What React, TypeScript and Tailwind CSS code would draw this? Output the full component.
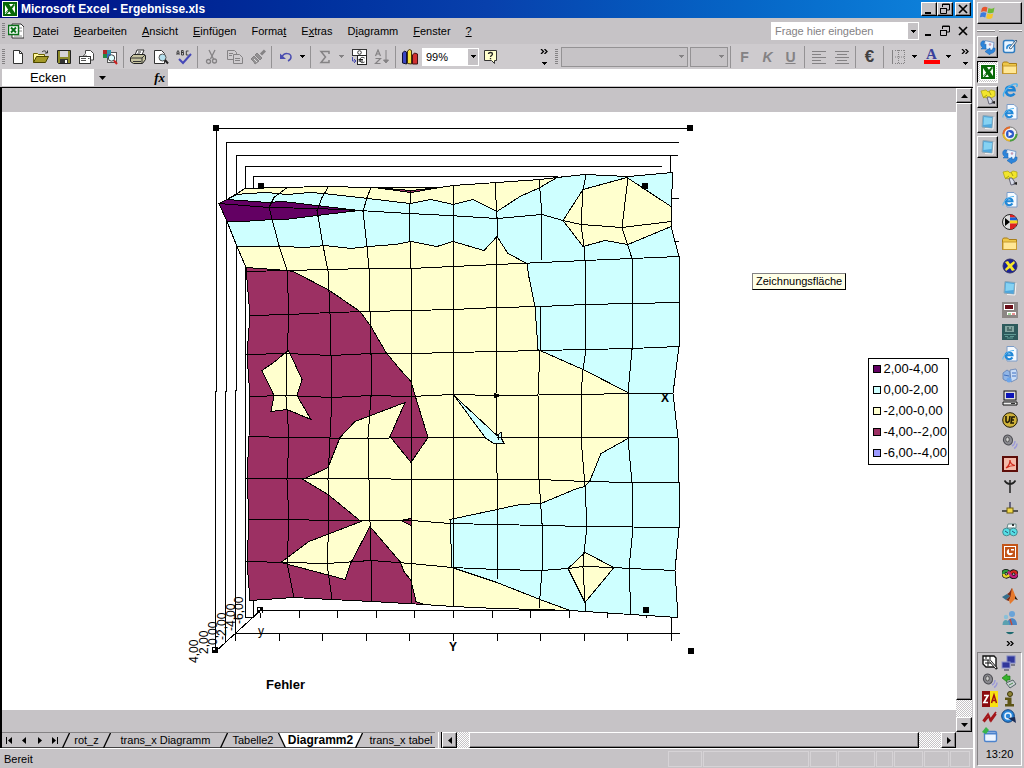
import React from "react";

type Pt = string;

const OUTLINE: Pt =
  "245,188 283,187 325,186 370,187 440,187 453,185 497,182 540,179 557,177 585,174 628,176 673,172 671,206 671,226 679,256 679,302 679,346 673,393 678,437 679,482 679,527 675,570 678,617 631,614 570,610 540,609 497,608 453,606 424,604 372,601 331,599 294,597 250,600 247,561 249,519 247,478 249,436 250,396 247,354 250,315 246,267 237,246 227,221 219,203 227,199 237,193";

const CYAN: Pt =
  "219,203 227,199 237,194 248,193 267,192 287,194 310,192 323,193 368,198 410,203 431,199 449,203 453,204 473,199 497,211 520,196 540,187 557,177 585,174 628,176 673,172 671,206 671,226 679,256 679,302 679,346 673,393 678,437 679,482 679,527 675,570 678,617 631,614 570,610 540,599 497,582 452,567 450,519 497,509 520,504 541,503 577,488 585,486 590,480 601,453 628,438 628,392 583,369 540,350 538,349 535,306 529,277 527,263 508,253 497,236 484,250 453,241 437,246 411,241 395,244 368,246 351,248 325,245 305,247 283,246 265,246 237,246 227,221";

const MAROON: Pt =
  "246,267 287,270 293,271 328,289 360,311 371,326 386,352 401,370 411,381 416,398 428,437 411,462 390,436 405,402 355,421 340,437 328,467 303,479 328,494 361,521 309,541 281,562 345,579 351,562 370,526 400,561 404,571 411,580 416,601 424,604 372,601 331,599 294,597 250,600 247,561 249,519 247,478 249,436 250,396 247,354 250,315";

const GRID: Pt[] = [
  "287,187 274,197 269,207 279,245 287,270 289,314 287,351 286,396 289,437 287,479 289,519 287,562 294,597",
  "328,187 322,197 317,210 323,245 328,270 330,313 331,354 332,396 330,437 328,479 329,520 327,563 332,599",
  "371,187 367,197 363,211 367,246 369,268 370,311 371,354 371,396 368,437 369,479 370,521 371,560 372,601",
  "411,190 410,203 409,213 410,241 411,268 411,603",
  "453,185 453,606",
  "495,182 497,217 497,237 496,394 496,437 498,507 497,580 497,607",
  "539,178 542,214 541,260 541,307 540,350 538,394 539,479 542,523 542,570 539,608",
  "586,175 583,189 581,224 584,246 585,260 585,305 586,349 583,370 581,394 581,437 585,486 587,526 584,552 583,567 585,602 585,611",
  "628,177 622,227 632,258 632,349 628,392 628,438 632,482 633,528 629,568 631,614",
  "219,203 269,207 317,208 359,210 409,213 449,215 497,218 542,214 563,220 581,224 622,227 671,221",
  "247,271 287,270 328,269 369,268 411,268 453,266 497,264 541,262 585,260 632,258 679,256",
  "250,315 289,314 330,312 370,311 411,310 453,309 497,307 541,306 585,304 632,303 679,302",
  "247,354 287,353 331,355 371,353 411,353 453,352 497,351 540,350 586,349 632,348 679,346",
  "250,396 286,395 332,397 371,395 411,396 453,394 497,395 581,394 628,393 673,393",
  "249,436 289,437 368,438 411,437 678,437",
  "247,478 328,478 453,479 539,479 585,481 632,482 679,482",
  "249,519 289,519 329,520 411,520 450,523 542,525 587,526 679,527",
  "247,561 287,562 327,563 371,560 411,563 452,567 497,569 542,570 568,568 583,566 614,567 629,568 675,570",
];

const WALLS: Pt[] = [
  "690,128 216,128 216,391 215,391 215,650",
  "678,142 226,142 226,391 225,391 225,642",
  "677,155 236,155 236,390 235,390 235,640",
  "661,166 245,166 245,617",
  "557,176 253,176 253,187",
  "253,600 253,617 244,617",
  "670,155 670,172",
  "671,198 678,198",
  "674,241 678,241",
  "215,651 260,610",
  "260,610 671,610",
  "235,633 679,633",
  "671,617 671,640",
];

const INNER_TICKS = [260, 299, 337, 376, 414, 453, 492, 530, 569, 607, 646];
const OUTER_TICKS = [235, 279, 322, 366, 409, 453, 497, 540, 584, 627];
const HANDLES = [[216, 128], [690, 128], [261, 186], [645, 186], [260, 610], [646, 610], [215, 650], [691, 651]];
const DEPTH_LABELS: [string, number, number][] = [
  ["4,00", 198, 663],
  ["2,00", 208, 654],
  ["0,00", 217, 645],
  ["-2,00", 226, 640],
  ["-4,00", 235, 631],
  ["-6,00", 243, 624],
];

function SurfaceChart() {
  return (
    <svg width="520" height="598" viewBox="180 112 520 598" className="ml-[178px] shrink-0 self-start" role="img" aria-label="Fehler">
      <g transform="translate(.5 .5)" stroke="#000" fill="none" shapeRendering="crispEdges">
        {WALLS.map((p) => <polyline key={p} points={p} />)}
        {INNER_TICKS.map((x) => <path key={x} d={`M${x} 610v7`} />)}
        {OUTER_TICKS.map((x) => <path key={x} d={`M${x} ${x === 235 ? 627 : 633}V640`} />)}
      </g>
      <g transform="translate(0 .5)" stroke="#000" fill="none" shapeRendering="crispEdges">
        <polygon points={OUTLINE} fill="#ffffce" />
        <polygon points={CYAN} fill="#ceffff" />
        <polygon points="563,220 583,189 627,177 671,206 671,226 628,244 605,240 583,246" fill="#ffffce" />
        <polygon points="585,552 614,567 585,602 568,568" fill="#ffffce" />
        <polygon points={MAROON} fill="#9c3063" />
        <polygon points="262,370 275,361 288,350 290,353 302,379 297,395 311,419 287,409 271,411 274,395" fill="#ffffce" />
        <polygon points="219,203 227,199 268,202 283,201 325,206 359,210 325,214 285,219 272,219 243,221 227,221" fill="#630063" />
        <polygon points="374,187 411,190 440,187 411,192" fill="#9c3063" />
        <polygon points="401,520 411,518 411,525" fill="#9c3063" />
        <polygon points="494,393 500,395 494,397" fill="#5a2038" />
        {GRID.map((p) => <polyline key={p} points={p} />)}
        <polygon points="454,395 497,435 501,432 501,437 504,443 494,443 486,438" fill="#ceffff" />
        <path d="M497 437h5M498 434v5" />
      </g>
      {HANDLES.map(([x, y]) => <rect key={`${x}-${y}`} x={x - 3} y={y - 3} width="6" height="6" />)}
      <path d="M213 648h2v2h-2zM258 608h2v2h-2zM260 611h2v2h-2z" fill="#fff" />
      <g fontFamily="'Liberation Sans', Arial, sans-serif" fontSize="12">
        {DEPTH_LABELS.map(([t, x, y]) => (
          <text key={t} transform={`translate(${x} ${y}) rotate(-90)`}>{t}</text>
        ))}
        <text x="258" y="635">y</text>
        <text x="449" y="651" fontWeight="bold">Y</text>
        <text x="661" y="402" fontWeight="bold">X</text>
        <text x="266" y="689" fontWeight="bold" fontSize="13">Fehler</text>
      </g>
    </svg>
  );
}

const LEGEND = [
  { label: "2,00-4,00", swatch: "bg-[#630063]" },
  { label: "0,00-2,00", swatch: "bg-[#ceffff]" },
  { label: "-2,00-0,00", swatch: "bg-[#ffffce]" },
  { label: "-4,00--2,00", swatch: "bg-[#9c3063]" },
  { label: "-6,00--4,00", swatch: "bg-[#9c9aff]" },
];

/* ---------- icons ---------- */

function Ico({ children, size = 16 }: { children: React.ReactNode; size?: number }) {
  return (
    <svg width={size} height={size} viewBox="0 0 16 16" className="shrink-0" aria-hidden="true">
      {children}
    </svg>
  );
}

const Down = () => (
  <svg width="5" height="3" viewBox="0 0 5 3" shapeRendering="crispEdges" className="shrink-0" fill="currentColor" aria-hidden="true">
    <path d="M0 0h5v1H0zM1 1h3v1H1zM2 2h1v1H2z" />
  </svg>
);

const ExcelIcon = ({ size }: { size?: number }) => (
  <Ico size={size}>
    <rect width="16" height="16" fill="#fff" />
    <rect x="1" y="1" width="14" height="14" fill="#086808" />
    <rect x="3" y="3" width="10" height="10" fill="#fff" />
    <path d="M3 3h4l6 9v1H9L3 4z" fill="#086808" />
    <path d="M12.500 3.500l-8.500 9" stroke="#086808" strokeWidth="2" />
    <path d="M11.500 5.500l1.500-1M4 12l2-2" stroke="#fff" strokeWidth=".6" />
  </Ico>
);
const ExcelDoc = () => (
  <Ico>
    <path d="M4 1h9l3 3v11H4z" fill="#fff" stroke="#333" />
    <path d="M11 5h3M11 8h3M6 13h8" stroke="#888" />
    <rect x=".5" y="2.500" width="10" height="9" fill="#fff" stroke="#087018" strokeWidth="1.500" />
    <path d="M3 4.500l5 5M8 4.500l-5 5" stroke="#087018" strokeWidth="2" />
  </Ico>
);
const NewDoc = () => <Ico><path d="M3.500 1.500h6l3 3v10h-9z" fill="#fff" stroke="#333" /><path d="M9.500 1.500v3h3" fill="none" stroke="#333" /></Ico>;
const OpenIcon = () => (
  <Ico>
    <path d="M.5 13.500v-9h4l1 1h6v2" fill="#fff79c" stroke="#6b6300" />
    <path d="M.5 13.500l3-6h12l-3 6z" fill="#a59a29" stroke="#4a4500" />
    <path d="M9 3c2-2 4-1 5 1M12 4h2.500V1.500" fill="none" stroke="#333" />
  </Ico>
);
const SaveIcon = () => (
  <Ico>
    <path d="M1.500 1.500h13v13h-12l-1-1z" fill="#8c8a29" stroke="#222" />
    <rect x="4" y="2" width="8" height="6" fill="#d6d3d6" />
    <rect x="4" y="10" width="8" height="4" fill="#333" /><rect x="9" y="11" width="2" height="3" fill="#fff" />
  </Ico>
);
const MailDoc = () => (
  <Ico>
    <path d="M6.500 6V1.500h5l3 3V11H12" fill="#fff" stroke="#444" />
    <path d="M7 4l-3 3h4" fill="#eee" stroke="#666" />
    <rect x=".5" y="7.500" width="11" height="7" fill="#fff" stroke="#333" />
    <path d="M2 9.500h5M2 11.500h5M9 9.500h1.500" stroke="#555" />
  </Ico>
);
const FindDoc = () => (
  <Ico>
    <rect x="5.500" y="3.500" width="9" height="10" fill="#fff" stroke="#555" />
    <rect x="1" y="1" width="4" height="4" fill="#b02828" /><rect x="5" y="1" width="4" height="4" fill="#39a" />
    <rect x="1" y="5" width="4" height="4" fill="#284" /><rect x="5" y="5" width="4" height="4" fill="#36c" />
    <circle cx="9.500" cy="9" r="3.200" fill="#dff" stroke="#444" /><path d="M12 11.500l3 3.500" stroke="#c22" strokeWidth="2" />
  </Ico>
);
const PrintIcon = () => (
  <Ico>
    <path d="M5 6l2-5h7l-2 5" fill="#fff" stroke="#333" />
    <path d="M.5 8.500l3-3h11l1 1v4l-3 4h-9l-3-2z" fill="#c6c3a0" stroke="#222" />
    <path d="M1 9h11l3-3M3 12.500h8M12 9v5M8 3h3M7 5h3" fill="none" stroke="#333" />
  </Ico>
);
const PreviewIcon = () => (
  <Ico>
    <path d="M1.500 1.500h7l3 3v10h-10z" fill="#fff" stroke="#333" />
    <circle cx="9.500" cy="8.500" r="3.500" fill="#b5e0ee" stroke="#555" /><path d="M12 11l3 3.500" stroke="#222" strokeWidth="2" />
  </Ico>
);
const SpellIcon = () => (
  <Ico>
    <g fill="none" stroke="#333" strokeWidth=".9">
      <path d="M1 6V3l1-1.500L3 3v3M1 4.300h2M5.500 6V1.500h1.700v2H5.500h2V6zM12.500 2h-2.200v4h2.200" />
    </g>
    <path d="M3 10l4 4 8-9" fill="none" stroke="#4548b8" strokeWidth="2" />
  </Ico>
);
const CutIcon = () => <Ico><path d="M5 1l4.500 9M11 1L6.500 10" stroke="#848284" strokeWidth="1.300" /><circle cx="4.500" cy="12.500" r="2" fill="none" stroke="#848284" strokeWidth="1.300" /><circle cx="10.500" cy="12" r="2" fill="none" stroke="#848284" strokeWidth="1.300" /></Ico>;
const CopyIcon = () => <Ico><path d="M.5 1.500h7l2 2v7h-9z" fill="#cecbce" stroke="#848284" /><path d="M6.500 5.500h6l3 3v6h-9z" fill="#cecbce" stroke="#848284" /><path d="M2 4.500h4M2 6.500h3M8 9.500h5M8 11.500h5" stroke="#848284" /></Ico>;
const BrushIcon = () => <Ico><path d="M15 1.500l-4 4" stroke="#848284" strokeWidth="3" /><path d="M7 4l5 5-2 2-5-5zM4 7l5 5-4 3-1-2-3-3z" fill="#949294" stroke="#848284" /><path d="M4 10l3 3" stroke="#ddd" /></Ico>;
const UndoIcon = () => <Ico><path d="M4 8c2-5 9-4 9 0 0 2-1 3-3 4" fill="none" stroke="#4a4db0" strokeWidth="1.500" /><path d="M2 4.500V10h6z" fill="#4a4db0" /></Ico>;
const SumIcon = () => <Ico><path d="M12 5V2.500H4L8.500 8 4 13.500h8V11" fill="none" stroke="#848284" strokeWidth="1.500" /></Ico>;
const EuroConv = () => (
  <Ico>
    <rect x="1.500" y=".5" width="14" height="6" fill="#fff" stroke="#333" /><circle cx="8.500" cy="3.500" r="1.800" fill="none" stroke="#333" />
    <rect x="6.500" y="6.500" width="9" height="9" fill="#fff" stroke="#222" />
    <path d="M13.500 9c-3-1.500-4.500 0-4.500 2s1.500 3.500 4.500 2M7.500 10.500H12M7.500 12H12" fill="none" stroke="#222" />
    <path d="M1.500 8v4h3M3 10l2 2-2 2" fill="none" stroke="#4a4db0" />
  </Ico>
);
const SortIcon = () => (
  <Ico>
    <path d="M1.500 7l2.500-6 2.500 6M2.500 5h3M1.500 9.500h5l-5 5h5" fill="none" stroke="#848284" strokeWidth="1.200" />
    <path d="M12 1v12M9.500 11l2.500 3 2.500-3z" fill="#848284" stroke="#848284" />
  </Ico>
);
const ChartIcon = () => (
  <Ico>
    <path d="M.5 4l2-2 2 1v12l-4-1z" fill="#3a45c0" stroke="#113" /><path d="M5.500 2l2-1.500 2 1V15l-4-.5z" fill="#f4e13a" stroke="#431" /><path d="M10.500 6l2-2 3 1v10h-5z" fill="#d03030" stroke="#411" />
  </Ico>
);
const HelpIcon = () => (
  <Ico>
    <path d="M1.500 1.500h12v10h-2v3l-3-3h-7z" fill="#ffffce" stroke="#333" />
    <path d="M5.500 5c0-2 4-2 4 0 0 1.500-2 1.500-2 3M7.500 9v1.300" fill="none" stroke="#222" strokeWidth="1.300" />
  </Ico>
);
const AlignIcon = ({ center }: { center?: boolean }) => (
  <Ico>
    <path d={center ? "M1 2.500h14M3 5.500h10M1 8.500h14M3 11.500h10M1 14h14" : "M1 2.500h14M1 5.500h9M1 8.500h14M1 11.500h9M1 14h14"} stroke="#848284" shapeRendering="crispEdges" />
  </Ico>
);
const BordersIcon = () => (
  <Ico>
    <path d="M2.500 1v14" stroke="#848284" />
    <path d="M5 1.500h10M5 8h10M5 14.500h10M8.500 1v14M14.500 1v14" stroke="#848284" strokeDasharray="1 1" />
  </Ico>
);

const MinGlyph = () => <Ico><path d="M4 12h6" stroke="#000" strokeWidth="2" /></Ico>;
const RestoreGlyph = () => <Ico><path d="M5.500 6V3h7v6H10M5 3.500h8" fill="none" stroke="#000" /><path d="M3.500 7.500h6v5h-6zM3 7.500h7" fill="none" stroke="#000" /></Ico>;
const CloseGlyph = () => <Ico><path d="M4 4l8 8M12 4l-8 8" stroke="#000" strokeWidth="1.700" /></Ico>;

const Folder = () => <Ico><path d="M.5 3.500l1-1.500h4l1.500 1.500h7.500v10H.5z" fill="#eec748" stroke="#a87d18" /><path d="M1 6h13.500v7.500H1z" fill="#ffe795" stroke="#c79a30" /></Ico>;
const IEBlue = () => (
  <Ico>
    <path d="M12.500 11.500c-3 4-8.500 2-8.500-3s8-5.500 8.500-.3H5" fill="none" stroke="#1d83d4" strokeWidth="2.600" />
    <path d="M2 14.500C-1 12 8 1 14.500 2c1.500.5.500 2 0 3" fill="none" stroke="#4ab2f0" strokeWidth="1.400" />
  </Ico>
);
const IEDoc = () => (
  <Ico>
    <path d="M5 .5h7l3 3V15H5z" fill="#f5faff" stroke="#7b9cc8" />
    <path d="M10.500 11.500c-2.500 3-7 1.500-7-2s6.500-4.500 7-.3H4.500" fill="none" stroke="#2088d8" strokeWidth="2" />
    <path d="M1 13.500C0 11 6 4 12 4.500" fill="none" stroke="#58b6ef" />
  </Ico>
);
const Outlook = () => (
  <Ico>
    <path d="M5 1.500l9 2-1 8-9-2z" fill="#eaf4ff" stroke="#7b9cc8" /><circle cx="10" cy="5.500" r="1.300" fill="#c89ab0" />
    <path d="M1 3.500C2 1.500 4 1.500 5 2.500c-1.500 1-1.500 2.500-.5 3.500L6 5v5H1l1.500-1.500C.5 7 .5 5 1 3.500z" fill="#2d86dc" stroke="#1761b0" strokeWidth=".5" />
    <path d="M15 9c.5 3-1 5.500-5 5.500V16l-5-3.500L10 9v2.500c2 0 3-1 3-2.500z" fill="#2d86dc" stroke="#1761b0" strokeWidth=".5" />
  </Ico>
);
const YellowTool = () => (
  <Ico>
    <path d="M1 2l5-1 2 2 3-2 4 1v5l-4 2H7L3 8z" fill="#f2e52c" stroke="#a8a010" strokeWidth=".7" />
    <path d="M3 9l4-3M9 2l2 4" stroke="#a8a010" /><path d="M7 8l2 7 5-1-4-6z" fill="#d6dae8" stroke="#667" /><path d="M11 13l4 2v-3z" fill="#222" />
  </Ico>
);
const NotePad = () => <Ico><path d="M3 1.500l10 1-1 12-10-1.500z" fill="#4fa6dc" stroke="#8fa7b5" /><path d="M4 3l8 1-.500 6-8 1z" fill="#86d2f2" /><path d="M14 3l-1 12-8-.5" fill="none" stroke="#f4f4f4" /></Ico>;
const MediaPlayer = () => <Ico><circle cx="8" cy="8" r="7" fill="#eee" stroke="#777" /><path d="M8 1.500A6.500 6.500 0 0 0 1.500 8" stroke="#e36b2a" strokeWidth="2" fill="none" /><path d="M8 14.500A6.500 6.500 0 0 0 14.500 8" stroke="#4a9f3a" strokeWidth="2" fill="none" /><path d="M1.500 8A6.500 6.500 0 0 0 8 14.500" stroke="#e3b62a" strokeWidth="2" fill="none" /><circle cx="8" cy="8" r="4" fill="#2a58c8" /><path d="M6.500 5.500v5l4-2.500z" fill="#fff" /></Ico>;
const ColorDisc = () => <Ico><circle cx="8" cy="8" r="7.500" fill="#ddd" stroke="#222" /><path d="M8 .5a7.500 7.500 0 0 1 6 3H8z" fill="#e02020" /><path d="M8 3.500h6l1.400 3H8z" fill="#1a62d8" /><path d="M8 6.500h7.500v3H8z" fill="#f7d51d" /><path d="M8 9.500h7.300l-1.500 3H8zM8 12.500h5.500a7 7 0 0 1-5.500 3z" fill="#d22" /><path d="M3 4l5 4-5 4z" fill="#000" /></Ico>;
const CrossDisc = () => <Ico><circle cx="8" cy="8" r="7" fill="#1b2299" stroke="#336" /><path d="M3 4l3-1 2 3 4-3 1 2-3 3 3 4-3 1-2-3-4 3-1-2 3-3z" fill="#f6e72b" /></Ico>;
const RedMonitor = () => <Ico><rect width="16" height="16" fill="#8c8684" /><rect x="2" y="2" width="10" height="6" fill="#fff" /><rect x="3" y="3" width="8" height="4" fill="#6b0e18" /><rect x="5" y="10" width="9" height="3" fill="#fff" /><path d="M6 12h3" stroke="#4a3" /><path d="M10 12h3" stroke="#c22" /></Ico>;
const TealScreen = () => <Ico><rect width="16" height="16" fill="#2d5a5c" /><rect x="3" y="2" width="9" height="6" fill="#82a5a0" /><path d="M5 4h2M9 4h1M5 6h5" stroke="#1d3c3c" /><path d="M2 10.500h12M3 12.500h3M8 12.500h4M5 14h6" stroke="#5f9a94" /></Ico>;
const Cubes = () => <Ico><path d="M1 5l4-3 3 2v6l-4 3-3-2z" fill="#91b5e5" stroke="#5576ad" strokeWidth=".7" /><path d="M8 2l6-1 1 3v7l-6 3z" fill="#c9dcf5" stroke="#5576ad" strokeWidth=".7" /><path d="M2 7l5 1M10 5h4M10 8h4" stroke="#3e6ec0" /><circle cx="7" cy="12" r="2.500" fill="#6ca5ea" /></Ico>;
const PC = () => <Ico><rect x="2" y="1" width="12" height="9" fill="#ddd" stroke="#111" /><rect x="4" y="3" width="8" height="5" fill="#0c14b8" /><path d="M1 12h14v3H1z" fill="#eee" stroke="#111" /><path d="M9 13.500h4" stroke="#333" /></Ico>;
const UltraEdit = () => <Ico><circle cx="8" cy="8" r="7.300" fill="#cfb23a" stroke="#221c05" /><path d="M4 4v5c0 2 3 2 3.500-1L8 4M13 5h-3l-1 6h3M9.500 8H12" fill="none" stroke="#221c05" strokeWidth="1.600" /></Ico>;
const Speaker = () => <Ico><ellipse cx="6" cy="6" rx="4.500" ry="5" fill="#8a8a90" stroke="#4a4a50" transform="rotate(-20 6 6)" /><ellipse cx="5.500" cy="5.500" rx="1.800" ry="2.400" fill="#ccc" stroke="#555" /><path d="M10 12c2-1 3-3 3-5M12 14.500c2-1 3-3 3-5" fill="none" stroke="#9c9ad8" strokeWidth="1.400" /></Ico>;
const Acrobat = () => <Ico><rect x="1" y="1" width="14" height="14" fill="#f4b9a8" stroke="#5d0d08" strokeWidth="2" /><path d="M4 12c3-2 4-6 4-8 0 3 2 5 5 5.500-3 0-6 .5-9 2.500z" fill="none" stroke="#d0281a" strokeWidth="1.200" /></Ico>;
const Fork = () => <Ico><path d="M8 15V2M2.500 2.500C4 5 6 6 8 6s4-1 5.500-3.500" fill="none" stroke="#222" strokeWidth="1.500" /></Ico>;
const NetDrive = () => <Ico><path d="M8 2v7" stroke="#446" strokeWidth="1.500" /><path d="M0 11h16" stroke="#555" strokeWidth="2" /><rect x="5" y="8" width="6" height="5" fill="#f2d94a" stroke="#6e5f14" /></Ico>;
const Goggles = () => <Ico><path d="M6 2h8v4H5z" fill="#f4f8f8" stroke="#688" /><path d="M10 3h2" stroke="#000" strokeWidth="1.500" /><circle cx="4.500" cy="10" r="3.800" fill="#55dfe6" stroke="#468a90" /><circle cx="11.500" cy="10" r="3.800" fill="#55dfe6" stroke="#468a90" /><path d="M3 9l3 2M10 9l3 2" stroke="#257" /></Ico>;
const PowerPoint = () => <Ico><rect width="16" height="16" fill="#c35418" /><rect x="2.500" y="2.500" width="11" height="11" fill="none" stroke="#fff" /><path d="M7 5a3.200 3.200 0 1 0 4 4H7zM9 5h3v1.500H9z" fill="#fff" /></Ico>;
const Infinity8 = () => (
  <Ico>
    <path d="M8 8C5 3 1 5 1.500 8s4 4 6.500 0c2.500-4 6-3 6.500 0s-4 5-6.500 0" fill="none" stroke="#111" strokeWidth="4" />
    <path d="M8 8C5 3 1 5 1.500 8" fill="none" stroke="#2b9b3c" strokeWidth="2.400" /><path d="M1.500 8c.5 3 4 4 6.500 0" fill="none" stroke="#e8d62a" strokeWidth="2.400" />
    <path d="M8 8c2.500-4 6-3 6.500 0" fill="none" stroke="#d4281e" strokeWidth="2.400" /><path d="M14.500 8c.5 3-4 5-6.500 0L6 5.500" fill="none" stroke="#c0207a" strokeWidth="2.400" />
  </Ico>
);
const Matlab = () => <Ico><path d="M0 9l5-3 3 2-4 4z" fill="#356f8c" /><path d="M5 6c3-1 4-5 5-6l1 4-4 9-3-1 4-4z" fill="#7a2a16" /><path d="M10 0c2 3 3 9 6 12l-3-1-5 5-1-4c2-2 2-8 3-12z" fill="#e6792c" /><path d="M13 11l3 1-3-4z" fill="#222" /></Ico>;
const People = () => <Ico><circle cx="10" cy="4" r="3" fill="#6aa3d8" /><path d="M5 15c0-9 10-9 10 0z" fill="#4b86c4" /><circle cx="4" cy="7" r="2.200" fill="#8ac0d8" /><path d="M.5 15c0-6 6-7 7 0z" fill="#5aa0b0" /><path d="M8 9l2 6" stroke="#c04a3a" strokeWidth="1.500" /></Ico>;
const Pencil = () => <Ico><rect x="1.500" y="2.500" width="11" height="12" rx="2" fill="#e8f4ff" stroke="#2f7cc0" strokeWidth="1.500" /><path d="M5 11c-1-4 5-6 6-2" fill="none" stroke="#2a8ad6" strokeWidth="1.500" /><path d="M7 10l7-8 1 1-6 8z" fill="#fff" stroke="#246" strokeWidth=".8" /></Ico>;

const QUICK: [string, () => React.ReactElement][] = [
  ["Desktop", Pencil], ["Ordner", Folder], ["Internet Explorer", IEBlue], ["Webseite", IEDoc], ["Media Player", MediaPlayer],
  ["Outlook Express", Outlook], ["Werkzeug", YellowTool], ["Webseite 2", IEDoc], ["Farben", ColorDisc], ["Eigene Dateien", Folder],
  ["Kreuz", CrossDisc], ["Editor", NotePad], ["Monitor", RedMonitor], ["Terminal", TealScreen], ["Webseite 3", IEDoc],
  ["Module", Cubes], ["Arbeitsplatz", PC], ["UltraEdit", UltraEdit], ["Lautsprecher", Speaker], ["Acrobat", Acrobat],
  ["Antenne", Fork], ["Netzlaufwerk", NetDrive], ["Suche", Goggles], ["PowerPoint", PowerPoint], ["Schleife", Infinity8],
  ["Matlab", Matlab], ["Messenger", People],
];

const TrayPrinter = () => <Ico><path d="M1 1h11l2 2v9H4l-3-3z" fill="#fff" stroke="#111" strokeWidth="1.400" /><path d="M1 5h8M3 8h7M4 1v3M8 1v3M6 5v6" stroke="#111" /><path d="M8 6l7 8" stroke="#222" strokeWidth="2.500" /><path d="M8 6l6 7" stroke="#fff" /></Ico>;
const TrayNet = () => <Ico><rect x="6" y="1" width="8" height="7" fill="#31389b" stroke="#7d84c4" /><rect x="1" y="7" width="8" height="6" fill="#31389b" stroke="#8d93cc" /><path d="M10 10h4M3 15h5" stroke="#667" strokeWidth="1.500" /></Ico>;
const TrayEject = () => <Ico><path d="M1 5l5-4v2h3v4H6v2z" fill="#35b22c" stroke="#187012" strokeWidth=".6" /><path d="M5 10l7-3 3 4-6 4z" fill="#c9d0d2" stroke="#566" /><path d="M8 12l4-2" stroke="#4a8a50" /></Ico>;
const TrayZA = () => <Ico><rect width="8" height="16" fill="#8b0c10" /><rect x="8" width="8" height="16" fill="#f8e211" /><path d="M2 4.500h4l-4 7h4" fill="none" stroke="#fff" strokeWidth="1.700" /><path d="M9.500 12L12 4l2.500 8M10.500 9.500h3" fill="none" stroke="#a01010" strokeWidth="1.500" /></Ico>;
const TrayInfo = () => <Ico><circle cx="9" cy="3" r="2.500" fill="#8f8434" stroke="#3d380c" /><path d="M4 6.500h6.500V13H13v2.500H4V13h2.500V9H4z" fill="#5d5516" /></Ico>;
const TrayZig = () => <Ico><path d="M1 12l5-7 2 6 6-8M2 13l5-6 2 5 5-7" fill="none" stroke="#a3161a" strokeWidth="1.700" /></Ico>;
const TrayQ = () => <Ico><circle cx="7" cy="7" r="6.300" fill="#2a86d8" stroke="#123f7a" /><circle cx="7" cy="7" r="3" fill="none" stroke="#e8f4ff" strokeWidth="1.500" /><path d="M7 9l8 5-1-6z" fill="#1b2c55" /></Ico>;
const TrayWin = () => <Ico><rect x="2.500" y="4.500" width="12" height="10" rx="1.500" fill="#eef5ff" stroke="#4d83cc" strokeWidth="1.400" /><path d="M3 6.500h11" stroke="#4d83cc" strokeWidth="2" /><path d="M0 5l4-5 3 3-3 4z" fill="#39b54a" /></Ico>;

/* ---------- chrome pieces ---------- */

const raised = "border border-t-white border-l-white border-r-black border-b-black bg-[#c6c3c6] shadow-[inset_-1px_-1px_0_#848284]";
const checker = "bg-[repeating-conic-gradient(#fff_0_25%,#c6c3c6_0_50%)] bg-[length:2px_2px]";

function Sep() {
  return <span className="mx-[2px] h-[22px] w-px shrink-0 bg-[#949294]" />;
}
function Grip() {
  return <span className="h-4 w-[3px] shrink-0 bg-[repeating-linear-gradient(#848284_0_1px,transparent_1px_2px)]" />;
}
function Tool({ label, children }: { label: string; children: React.ReactNode }) {
  return (
    <button type="button" aria-label={label} className="flex h-[22px] w-[23px] shrink-0 items-center justify-center">
      {children}
    </button>
  );
}
function Drop({ label, muted }: { label: string; muted?: boolean }) {
  return (
    <button type="button" aria-label={label} className={`flex h-[22px] w-[11px] shrink-0 items-center justify-center ${muted ? "text-[#848284]" : "text-black"}`}>
      <Down />
    </button>
  );
}
function More({ label }: { label: string }) {
  return (
    <button type="button" aria-label={label} className="flex h-[22px] w-[10px] shrink-0 flex-col items-center justify-between py-[3px]">
      <Chevrons />
      <Down />
    </button>
  );
}
const Chevrons = () => (
  <svg width="8" height="5" viewBox="0 0 8 5" aria-hidden="true"><path d="M1 0l2.500 2.500L1 5M4.500 0L7 2.500 4.500 5" fill="none" stroke="#000" strokeWidth="1.300" /></svg>
);

const MENU: [string, string, string][] = [
  ["", "D", "atei"], ["", "B", "earbeiten"], ["", "A", "nsicht"], ["", "E", "infügen"], ["Forma", "t", ""],
  ["E", "x", "tras"], ["D", "i", "agramm"], ["", "F", "enster"], ["", "?", ""],
];

function Slash({ back, left, right }: { back?: boolean; left?: boolean; right?: boolean }) {
  return (
    <svg width="8" height="15" viewBox="0 0 8 15" className="shrink-0" aria-hidden="true">
      {left && <path d="M0 0h7L0 15z" fill="#fff" />}
      {right && <path d="M0 0h8v15H7z" fill="#fff" />}
      <path d={back ? "M.5 0l7 15" : "M7.500 0l-7 15"} stroke="#000" strokeWidth="1.300" />
    </svg>
  );
}

function NavArrow({ label, d }: { label: string; d: string }) {
  return (
    <button type="button" aria-label={label} className="flex h-[15px] w-[15px] shrink-0 items-center justify-center">
      <svg width="9" height="7" viewBox="0 0 9 7" aria-hidden="true"><path d={d} /></svg>
    </button>
  );
}

export default function App() {
  return (
    <div className="flex h-screen w-full overflow-hidden bg-[#c6c3c6] font-['Liberation_Sans',Arial,sans-serif] text-[11px] leading-[14px] text-black">
      <div className="flex min-w-0 flex-1 flex-col">
        <header className="flex h-[18px] shrink-0 items-center gap-[3px] bg-linear-to-r from-[#000c84] via-[#0840ac] to-[#1086de] pr-[2px] pl-[2px]">
          <ExcelIcon />
          <h1 className="text-[12px] font-bold whitespace-nowrap text-white">Microsoft Excel - Ergebnisse.xls</h1>
          <div className="ml-auto flex">
            <button type="button" aria-label="Minimieren" className={`flex h-[14px] w-4 items-center justify-center overflow-hidden ${raised}`}><MinGlyph /></button>
            <button type="button" aria-label="Wiederherstellen" className={`flex h-[14px] w-4 items-center justify-center overflow-hidden ${raised}`}><RestoreGlyph /></button>
            <button type="button" aria-label="Schließen" className={`ml-[2px] flex h-[14px] w-4 items-center justify-center overflow-hidden ${raised}`}><CloseGlyph /></button>
          </div>
        </header>

        <div className="flex h-[26px] shrink-0 items-center pl-[2px]">
          <Grip />
          <span className="ml-[3px]"><ExcelDoc /></span>
          <nav className="ml-[9px] flex gap-[15px]">
            {MENU.map(([a, u, b]) => (
              <button type="button" key={a + u + b}>{a}<span className="underline">{u}</span>{b}</button>
            ))}
          </nav>
          <div className="ml-auto flex h-[18px] w-[148px] items-center bg-white pr-px">
            <input aria-label="Frage hier eingeben" placeholder="Frage hier eingeben" className="h-full min-w-0 flex-1 bg-white pl-1 outline-none placeholder:text-[#848284]" />
            <button type="button" aria-label="Fragen anzeigen" className="flex h-4 w-[10px] items-center justify-center bg-[#c6c3c6]"><Down /></button>
          </div>
          <div className="ml-[2px] flex gap-0 pr-[2px]">
            <button type="button" aria-label="Fenster minimieren" className="flex w-4 justify-center"><MinGlyph /></button>
            <button type="button" aria-label="Fenster wiederherstellen" className="flex w-4 justify-center"><RestoreGlyph /></button>
            <button type="button" aria-label="Fenster schließen" className="ml-[2px] flex w-4 justify-center"><CloseGlyph /></button>
          </div>
        </div>

        <div className="flex h-[25px] shrink-0 items-center bg-[#cecbce] pl-[2px]">
          <Grip />
          <span className="ml-px flex">
            <Tool label="Neu"><NewDoc /></Tool>
            <Tool label="Öffnen"><OpenIcon /></Tool>
            <Tool label="Speichern"><SaveIcon /></Tool>
            <Tool label="E-Mail"><MailDoc /></Tool>
            <Tool label="Suchen"><FindDoc /></Tool>
          </span>
          <Sep />
          <Tool label="Drucken"><PrintIcon /></Tool>
          <Tool label="Seitenansicht"><PreviewIcon /></Tool>
          <Tool label="Rechtschreibung"><SpellIcon /></Tool>
          <Sep />
          <Tool label="Ausschneiden"><CutIcon /></Tool>
          <Tool label="Kopieren"><CopyIcon /></Tool>
          <Tool label="Format übertragen"><BrushIcon /></Tool>
          <Sep />
          <Tool label="Rückgängig"><UndoIcon /></Tool>
          <Drop label="Rückgängig-Liste" />
          <Sep />
          <Tool label="AutoSumme"><SumIcon /></Tool>
          <Drop label="Summen-Liste" muted />
          <Tool label="Euroumrechnung"><EuroConv /></Tool>
          <Tool label="Sortieren"><SortIcon /></Tool>
          <Sep />
          <Tool label="Diagramm-Assistent"><ChartIcon /></Tool>
          <div className="relative ml-px h-[18px] w-[57px] shrink-0">
            <select aria-label="Zoom" className="h-full w-full appearance-none bg-white pl-1 text-[11px] outline-none"><option>99%</option></select>
            <span className="pointer-events-none absolute top-px right-px flex h-4 w-[10px] items-center justify-center bg-[#c6c3c6]"><Down /></span>
          </div>
          <Tool label="Hilfe"><HelpIcon /></Tool>
          <span className="ml-auto"><More label="Weitere Schaltflächen" /></span>
          <span className="ml-[6px] flex"><Grip /></span>
          <div className="relative ml-[3px] h-[20px] w-[127px] shrink-0 text-[#848284]">
            <select aria-label="Schriftart" disabled className="h-full w-full appearance-none border border-[#949294] bg-[#c6c3c6]"><option></option></select>
            <span className="pointer-events-none absolute inset-y-0 right-[4px] flex items-center"><Down /></span>
          </div>
          <div className="relative ml-[2px] h-[20px] w-[38px] shrink-0 text-[#848284]">
            <select aria-label="Schriftgrad" disabled className="h-full w-full appearance-none border border-[#949294] bg-[#c6c3c6]"><option></option></select>
            <span className="pointer-events-none absolute inset-y-0 right-[4px] flex items-center"><Down /></span>
          </div>
          <Sep />
          <Tool label="Fett"><b className="text-[14px] text-[#848284]">F</b></Tool>
          <Tool label="Kursiv"><b className="text-[14px] text-[#848284] italic">K</b></Tool>
          <Tool label="Unterstrichen"><b className="text-[14px] text-[#848284] underline">U</b></Tool>
          <Sep />
          <Tool label="Linksbündig"><AlignIcon /></Tool>
          <Tool label="Zentriert"><AlignIcon center /></Tool>
          <Sep />
          <Tool label="Euro"><b className="text-[17px] text-[#424142]">€</b></Tool>
          <Sep />
          <Tool label="Rahmen"><BordersIcon /></Tool>
          <Drop label="Rahmen-Liste" />
          <Tool label="Schriftfarbe">
            <span className="flex flex-col items-center">
              <b className="font-['Liberation_Serif',serif] text-[15px] leading-[11px] text-[#39419c]">A</b>
              <i className="h-[4px] w-4 bg-[#ff0000]" />
            </span>
          </Tool>
          <Drop label="Farb-Liste" />
          <span className="mr-[3px] ml-[6px]"><More label="Weitere Formate" /></span>
        </div>

        <div className="flex h-[17px] shrink-0 items-stretch pr-px pl-[2px]">
          <input aria-label="Namenfeld" defaultValue="Ecken" className="w-[92px] bg-white text-center text-[13px] outline-none" />
          <button type="button" aria-label="Namen-Liste" className="flex w-[17px] items-center justify-center">
            <svg width="7" height="4" viewBox="0 0 7 4" aria-hidden="true"><path d="M0 0h7L3.500 4z" /></svg>
          </button>
          <button type="button" aria-label="Funktion einfügen" className="w-[57px] shrink-0 pr-[3px] text-right font-['Liberation_Serif',serif] text-[13px] font-bold italic">fx</button>
          <input aria-label="Bearbeitungsleiste" className="min-w-0 flex-1 bg-white outline-none" />
        </div>

        <div className="mt-px flex min-h-0 flex-1 flex-col border-t border-l-2 border-t-black border-l-black pr-px">
          <div className="flex min-h-0 flex-1">
            <main className="flex min-w-0 flex-1 flex-col">
              <div className="h-6 shrink-0" />
              <section className="relative flex min-h-0 flex-1 items-center overflow-hidden bg-white">
                <SurfaceChart />
                <ul className="mr-[7px] ml-auto shrink-0 border border-black bg-white pr-px pl-1 text-[13px]">
                  {LEGEND.map((l) => (
                    <li key={l.label} className="flex h-[21px] items-center gap-[2px]">
                      <span className={`h-[8px] w-[8px] border border-black ${l.swatch}`} />
                      {l.label}
                    </li>
                  ))}
                </ul>
                <div role="tooltip" className="absolute top-[161px] left-[750px] border border-t-[#848284] border-r-black border-b-black border-l-[#848284] bg-[#ffffe7] px-[3px] pb-px text-[11px]">
                  Zeichnungsfläche
                </div>
              </section>
              <div className="h-[22px] shrink-0" />
            </main>
            <div className="flex w-4 shrink-0 flex-col">
              <button type="button" aria-label="Nach oben" className={`flex h-[15px] items-center justify-center ${raised}`}>
                <svg width="7" height="4" viewBox="0 0 7 4" aria-hidden="true"><path d="M3.500 0L7 4H0z" /></svg>
              </button>
              <div className={`flex-1 ${raised}`} />
              <div className={`h-[17px] ${checker}`} />
              <button type="button" aria-label="Nach unten" className={`flex h-[15px] items-center justify-center ${raised}`}>
                <svg width="7" height="4" viewBox="0 0 7 4" aria-hidden="true"><path d="M0 0h7L3.500 4z" /></svg>
              </button>
            </div>
          </div>
          <div className="flex h-[16px] shrink-0 items-stretch">
            <div className="flex min-w-0 shrink-0 border-t border-b border-t-[#848284] border-b-[#424142]">
              <NavArrow label="Erstes Blatt" d="M1 0h1v7H1zM7 0v7L3 3.500z" />
              <NavArrow label="Voriges Blatt" d="M6 0v7L2 3.500z" />
              <NavArrow label="Nächstes Blatt" d="M3 0v7l4-3.500z" />
              <NavArrow label="Letztes Blatt" d="M2 0v7l4-3.500zM7 0h1v7H7z" />
              <Slash />
              <button type="button" className="w-[33px]">rot_z</button>
              <Slash />
              <button type="button" className="w-[109px]">trans_x Diagramm</button>
              <Slash />
              <button type="button" className="w-[50px]">Tabelle2</button>
              <Slash back right />
              <button type="button" className="w-[69px] bg-white text-[12px] font-bold">Diagramm2</button>
              <Slash left />
              <button type="button" className="w-[72px] overflow-hidden pl-1 text-center whitespace-nowrap">trans_x tabel</button>
            </div>
            <div className="ml-[3px] w-[4px] shrink-0 border-r border-l border-r-black border-l-white" />
            <button type="button" aria-label="Nach links" className={`flex w-[15px] shrink-0 items-center justify-center ${raised}`}>
              <svg width="4" height="7" viewBox="0 0 4 7" aria-hidden="true"><path d="M4 0v7L0 3.500z" /></svg>
            </button>
            <div className={`w-3 shrink-0 ${checker}`} />
            <div className={`flex-1 ${raised}`} />
            <div className={`w-[22px] shrink-0 ${checker}`} />
            <button type="button" aria-label="Nach rechts" className={`flex w-[15px] shrink-0 items-center justify-center ${raised}`}>
              <svg width="4" height="7" viewBox="0 0 4 7" aria-hidden="true"><path d="M0 0v7l4-3.500z" /></svg>
            </button>
            <div className="w-4 shrink-0" />
          </div>
        </div>

        <footer className="flex h-5 shrink-0 items-center border-t border-white pr-[3px] pl-1">
          <span>Bereit</span>
          <div className="ml-auto flex gap-px">
            <span className="h-4 w-[34px] border border-[#d6d3d6]" />
            <span className="h-4 w-[106px] border border-[#d6d3d6]" />
            <span className="h-4 w-[27px] border border-[#d6d3d6]" />
            <span className="h-4 w-[37px] border border-[#d6d3d6]" />
            <span className="h-4 w-[17px] border border-[#d6d3d6]" />
            <span className="h-4 w-[29px] border border-[#d6d3d6]" />
            <span className="h-4 w-[25px] border border-[#d6d3d6]" />
            <span className="h-4 w-[20px] border border-[#d6d3d6]" />
          </div>
        </footer>
      </div>

      <aside className="flex w-[51px] shrink-0 flex-col border-l-2 border-white pt-[2px] pr-[2px] pb-[2px] pl-[2px]">
        <button type="button" aria-label="Start" className={`flex h-[22px] shrink-0 items-center pl-[2px] ${raised}`}>
          <Ico>
            <path d="M2 3c2-1.500 3.500-1.500 5.500-.5L6.500 7C5 6 3 6 1 7z" fill="#e8552c" /><path d="M8.500 3c2 1 4 1 6-.5l-1 5c-2 1-4 1-6 .2z" fill="#6ebb35" />
            <path d="M.8 8c2-1.200 3.700-1 5.500-.2l-1 4.700c-2-1-4-1-5.500 0z" fill="#3d7ade" /><path d="M7.200 8.500c2 1 4 1 6 0l-1 4.500c-2 1.300-4 1.300-6 .2z" fill="#f5c52b" />
          </Ico>
        </button>
        <div className="mt-[4px] flex h-[6px] shrink-0 items-center gap-1">
          <span className="h-[2px] w-[18px] border-t border-b border-t-white border-b-[#848284]" />
          <span className="h-[2px] flex-1 border-t border-b border-t-white border-b-[#848284]" />
        </div>
        <div className="mt-px flex shrink-0 justify-between pr-1">
          <div className="flex w-[21px] flex-col gap-[3px] pt-px">
            <button type="button" aria-label="Outlook Express" className={`flex h-[22px] items-center justify-center ${raised}`}><Outlook /></button>
            <button type="button" aria-label="Microsoft Excel" className={`flex h-[22px] items-center justify-center border border-t-black border-r-white border-b-white border-l-black ${checker}`}><ExcelIcon /></button>
            <button type="button" aria-label="Werkzeug" className={`flex h-[22px] items-center justify-center ${raised}`}><YellowTool /></button>
            <button type="button" aria-label="Editor" className={`flex h-[22px] items-center justify-center ${raised}`}><NotePad /></button>
            <button type="button" aria-label="Editor 2" className={`flex h-[22px] items-center justify-center ${raised}`}><NotePad /></button>
          </div>
          <div className="flex flex-col items-center">
            {QUICK.map(([label, Icon]) => (
              <button type="button" key={label} aria-label={label} className="flex h-[22px] w-4 items-center justify-center"><Icon /></button>
            ))}
            <svg width="8" height="3" viewBox="0 0 8 3" className="mt-[3px]" aria-hidden="true"><path d="M0 0c2 3 6 3 8 0z" fill="#1d6a70" /></svg>
            <button type="button" aria-label="Mehr anzeigen" className="mt-[6px]"><Chevrons /></button>
          </div>
        </div>
        <div className="mt-auto flex flex-col border border-t-[#848284] border-r-white border-b-white border-l-[#848284] pt-[2px] pb-1">
          <div className="grid grid-cols-2 justify-items-center gap-y-[2px] px-[3px]">
            <TrayPrinter /><TrayNet /><Speaker /><TrayEject /><TrayZA /><TrayInfo /><TrayZig /><TrayQ /><TrayWin />
          </div>
          <time className="mt-1 text-center text-[11px]">13:20</time>
        </div>
      </aside>
    </div>
  );
}
